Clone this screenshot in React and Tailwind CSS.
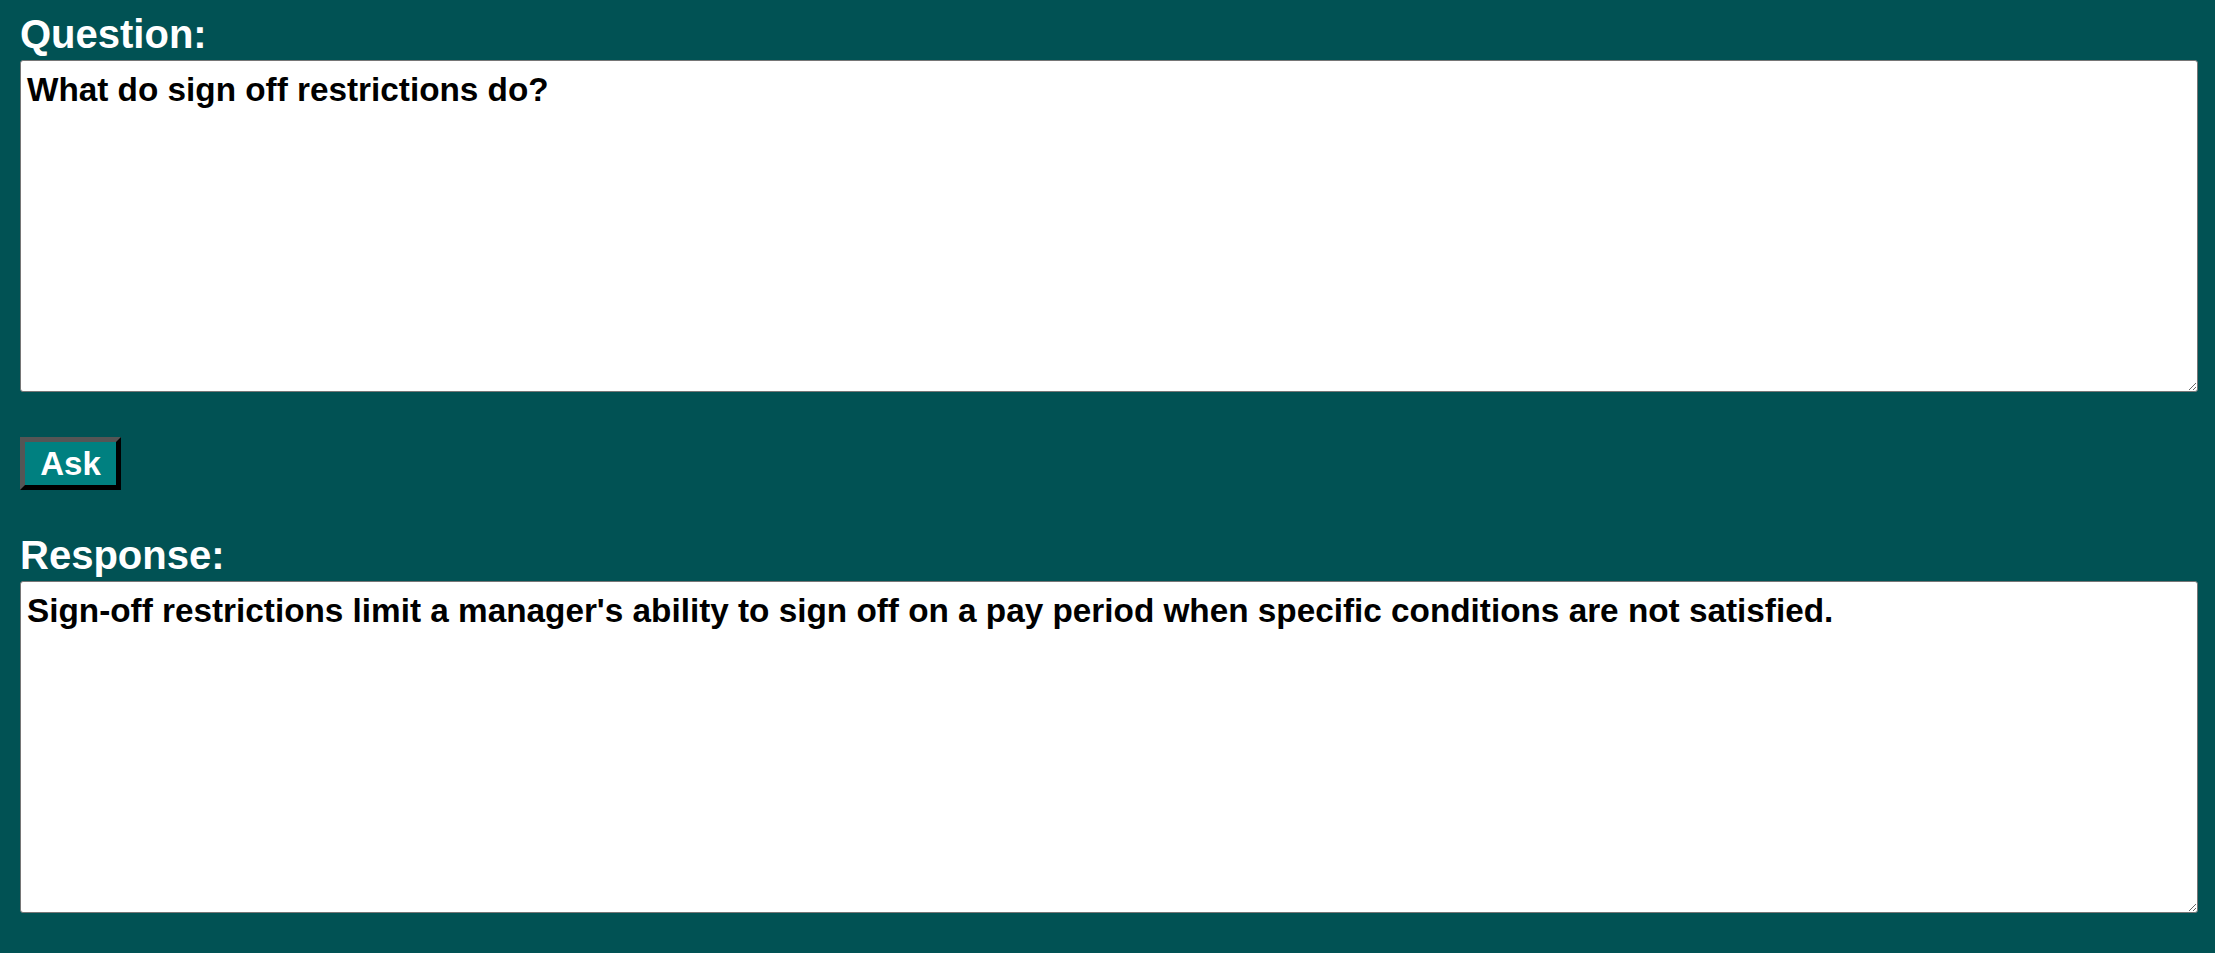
import { useState } from "react";

const Label = ({ htmlFor, children }) => (
  <label htmlFor={htmlFor} className="block text-[40px] font-bold leading-[45px] text-white">
    {children}
  </label>
);

const Box = ({ id, value, onChange }) => (
  <textarea
    id={id}
    value={value}
    onChange={onChange}
    className="mt-[3px] block h-[332px] w-full rounded-[3px] border border-[#767676] bg-white px-[6px] pt-[4px] text-[33.3px] font-bold leading-normal text-black outline-none"
  />
);

export default function App() {
  const [question, setQuestion] = useState("What do sign off restrictions do?");
  const [response, setResponse] = useState(
    "Sign-off restrictions limit a manager's ability to sign off on a pay period when specific conditions are not satisfied."
  );

  return (
    <div
      className="min-h-screen bg-[#015254] pl-[20px] pr-[17px] pt-[12px]"
      style={{ fontFamily: '"Liberation Sans", Arial, sans-serif' }}
    >
      <Label htmlFor="question">Question:</Label>
      <Box id="question" value={question} onChange={(e) => setQuestion(e.target.value)} />

      <button
        type="button"
        className="mt-[45px] flex h-[53px] w-[101px] items-center justify-center border-[5px] border-t-[#555555] border-l-[#555555] border-r-black border-b-black bg-[#008080] text-[33px] font-bold text-white"
      >
        Ask
      </button>

      <div className="mt-[43px]">
        <Label htmlFor="response">Response:</Label>
        <Box id="response" value={response} onChange={(e) => setResponse(e.target.value)} />
      </div>
    </div>
  );
}
